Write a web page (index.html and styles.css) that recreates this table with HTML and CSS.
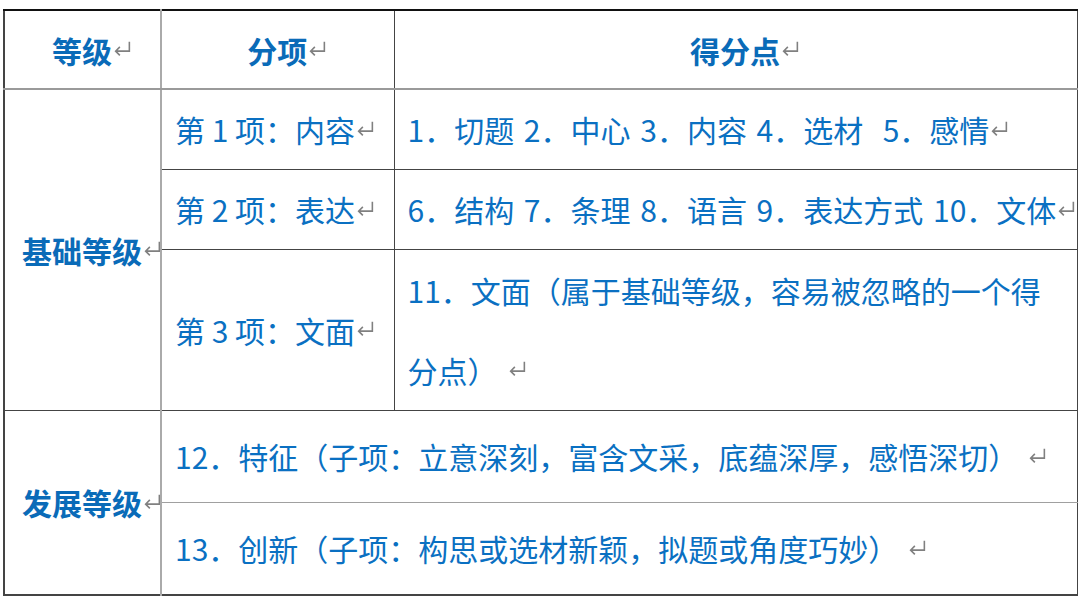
FILE: index.html
```html
<!DOCTYPE html>
<html lang="zh-CN">
<head>
<meta charset="utf-8">
<title>等级评分表</title>
<link rel="stylesheet" href="styles.css">
</head>
<body>
<table class="grid">
  <colgroup>
    <col class="c1">
    <col class="c2">
    <col class="c3">
  </colgroup>
  <thead>
    <tr class="r-head">
      <th class="lvl"><span class="t">等级</span><span class="pm z"><svg viewBox="0 0 18 16"><path d="M15.5 1.5V10.5H2.5M6.5 6.5L2.5 10.5L6.5 14.5"/></svg></span></th>
      <th class="sub"><span class="t">分项</span><span class="pm z"><svg viewBox="0 0 18 16"><path d="M15.5 1.5V10.5H2.5M6.5 6.5L2.5 10.5L6.5 14.5"/></svg></span></th>
      <th class="pts"><span class="t">得分点</span><span class="pm z"><svg viewBox="0 0 18 16"><path d="M15.5 1.5V10.5H2.5M6.5 6.5L2.5 10.5L6.5 14.5"/></svg></span></th>
    </tr>
  </thead>
  <tbody>
    <tr class="r-a">
      <th class="lvl lvl-basic" rowspan="3"><span class="t">基础等级</span><span class="pm z"><svg viewBox="0 0 18 16"><path d="M15.5 1.5V10.5H2.5M6.5 6.5L2.5 10.5L6.5 14.5"/></svg></span></th>
      <td class="sub">第 1 项：内容<span class="pm"><svg viewBox="0 0 18 16"><path d="M15.5 1.5V10.5H2.5M6.5 6.5L2.5 10.5L6.5 14.5"/></svg></span></td>
      <td class="pts">1．切题 2．中心 3．内容 4．选材&nbsp; 5．感情<span class="pm"><svg viewBox="0 0 18 16"><path d="M15.5 1.5V10.5H2.5M6.5 6.5L2.5 10.5L6.5 14.5"/></svg></span></td>
    </tr>
    <tr class="r-b">
      <td class="sub">第 2 项：表达<span class="pm"><svg viewBox="0 0 18 16"><path d="M15.5 1.5V10.5H2.5M6.5 6.5L2.5 10.5L6.5 14.5"/></svg></span></td>
      <td class="pts nowrap">6．结构 7．条理 8．语言 9．表达方式 10．文体<span class="pm"><svg viewBox="0 0 18 16"><path d="M15.5 1.5V10.5H2.5M6.5 6.5L2.5 10.5L6.5 14.5"/></svg></span></td>
    </tr>
    <tr class="r-c">
      <td class="sub">第 3 项：文面<span class="pm"><svg viewBox="0 0 18 16"><path d="M15.5 1.5V10.5H2.5M6.5 6.5L2.5 10.5L6.5 14.5"/></svg></span></td>
      <td class="pts tall">11．文面（属于基础等级，容易被忽略的一个得分点）<span class="pm sp"><svg viewBox="0 0 18 16"><path d="M15.5 1.5V10.5H2.5M6.5 6.5L2.5 10.5L6.5 14.5"/></svg></span></td>
    </tr>
    <tr class="r-d">
      <th class="lvl lvl-dev" rowspan="2"><span class="t">发展等级</span><span class="pm z"><svg viewBox="0 0 18 16"><path d="M15.5 1.5V10.5H2.5M6.5 6.5L2.5 10.5L6.5 14.5"/></svg></span></th>
      <td class="wide" colspan="2">12．特征（子项：立意深刻，富含文采，底蕴深厚，感悟深切）<span class="pm sp"><svg viewBox="0 0 18 16"><path d="M15.5 1.5V10.5H2.5M6.5 6.5L2.5 10.5L6.5 14.5"/></svg></span></td>
    </tr>
    <tr class="r-e">
      <td class="wide" colspan="2">13．创新（子项：构思或选材新颖，拟题或角度巧妙）<span class="pm sp"><svg viewBox="0 0 18 16"><path d="M15.5 1.5V10.5H2.5M6.5 6.5L2.5 10.5L6.5 14.5"/></svg></span></td>
    </tr>
  </tbody>
</table>
</body>
</html>
```

FILE: styles.css
```css
html, body {
  margin: 0;
  padding: 0;
  background: #ffffff;
}

body {
  padding: 9px 0 0 3px;
  font-family: "Noto Sans CJK SC", "Noto Sans", sans-serif;
  color: #0a70c2;
}

.grid {
  border-collapse: collapse;
  table-layout: fixed;
  width: 1073px;
  font-size: 30px;
  border-top: 2px solid #111111;
  border-left: 2px solid #444444;
  border-right: 1px solid #444444;
  border-bottom: 2px solid #444444;
}

.c1 { width: 157px; }
.c2 { width: 233px; }
.c3 { width: 683px; }

.grid th,
.grid td {
  padding: 0 13px;
  vertical-align: middle;
  text-align: left;
  font-weight: 400;
  line-height: 1.2;
  overflow: hidden;
  border-top: 1px solid #444444;
  border-bottom: 1px solid #444444;
  border-right: 1px solid #444444;
}

.grid th {
  text-align: center;
  font-weight: 700;
  color: #0a6bb8;
}

.grid .lvl {
  border-right: 2px solid #aaaaaa;
  padding: 0;
}

.grid .pts {
  word-spacing: 3px;
}

.r-head th {
  border-bottom: 2px solid #9a9a9a;
}

.r-head { height: 79px; }
.r-a { height: 80px; }
.r-b { height: 80px; }
.r-c { height: 159px; }
.r-d { height: 92px; }
.r-e { height: 93px; }

.r-d .wide {
  border-bottom: 1px solid #a0a0a0;
}

.r-e .wide {
  border-top: 1px solid #a0a0a0;
}

.nowrap {
  white-space: nowrap;
}

.tall {
  line-height: 80px !important;
}

.pm {
  display: inline-block;
  width: 19px;
  height: 17px;
  margin-left: 1px;
  vertical-align: 0.18em;
  word-spacing: 0;
}

.pm svg {
  display: block;
  width: 19px;
  height: 17px;
  fill: none;
  stroke: #808080;
  stroke-width: 1.5;
}

.pm.z {
  width: 0;
  overflow: visible;
}

.pm.sp {
  margin-left: 10px;
}
```
